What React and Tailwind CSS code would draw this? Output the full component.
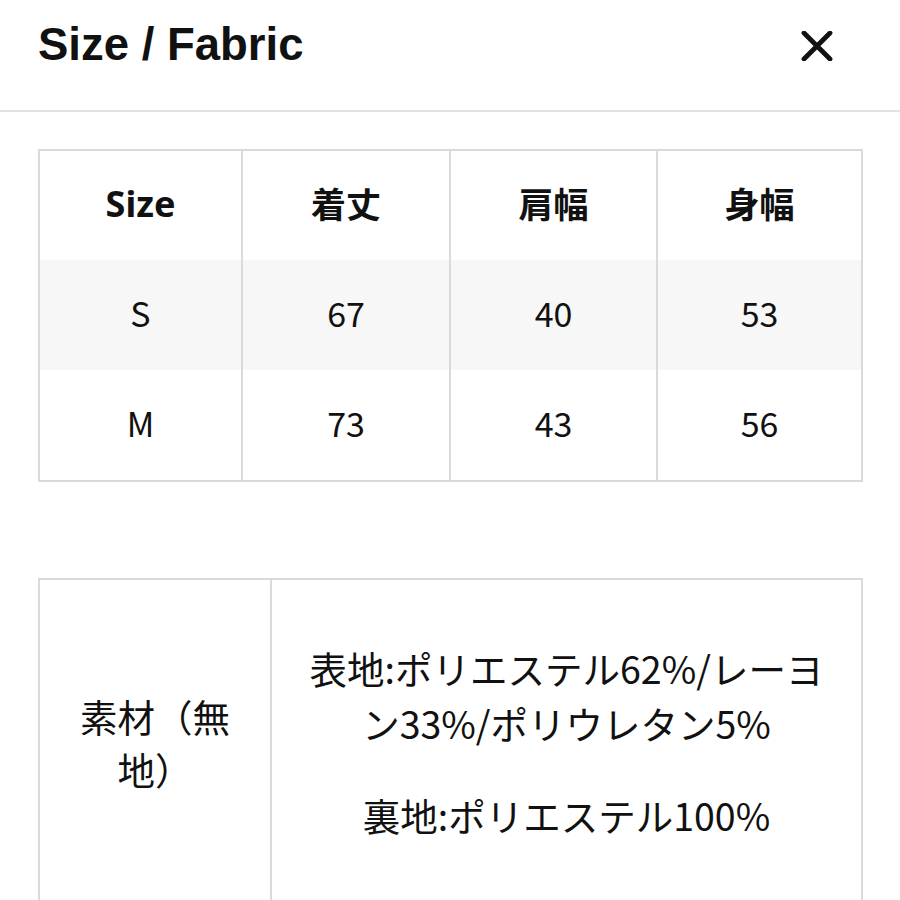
export default function App() {
  const cjk = "font-['Noto_Sans_CJK_JP',sans-serif]";
  const head = ["Size", "着丈", "肩幅", "身幅"];
  const rows = [
    ["S", "67", "40", "53"],
    ["M", "73", "43", "56"],
  ];
  return (
    <div className={`w-[900px] h-[900px] bg-white overflow-hidden text-[#111] ${cjk}`}>
      <div className="h-[90px] flex items-center justify-between pl-[38px] pr-[67px]">
        <h1 className="font-['Liberation_Sans',sans-serif] font-bold text-[45.5px] leading-none">Size / Fabric</h1>
        <svg width="32" height="30" viewBox="0 0 32 30" className="mt-[2px]">
          <path d="M3 2 L29 28 M29 2 L3 28" stroke="#111" strokeWidth="4.8" strokeLinecap="round" fill="none" />
        </svg>
      </div>
      <div className="h-[20px]" />
      <div className="h-[2px] bg-[#e2e2e2]" />

      <div className="mt-[37px] ml-[38px] w-[825px] border-2 border-[#dadada]">
        <div className="grid grid-cols-[201px_208px_207px_1fr] h-[109px]">
          {head.map((h, i) => (
            <div key={i} className={`flex items-center justify-center pb-[4px] font-bold ${i > 0 ? "border-l-2 border-[#dadada] text-[35px]" : "font-['Noto_Sans',sans-serif] text-[36px]"}`}>
              {h}
            </div>
          ))}
        </div>
        {rows.map((r, ri) => (
          <div key={ri} className={`grid grid-cols-[201px_208px_207px_1fr] h-[110px] ${ri === 0 ? "bg-[#f7f7f7]" : "bg-white"}`}>
            {r.map((c, i) => (
              <div key={i} className={`flex items-center justify-center pb-[5px] text-[34px] ${i > 0 ? "border-l-2 border-[#dadada]" : ""}`}>
                {c}
              </div>
            ))}
          </div>
        ))}
      </div>

      <div className="mt-[96px] ml-[38px] w-[825px] h-[340px] border-2 border-[#dadada] grid grid-cols-[230px_1fr]">
        <div className="flex items-center justify-center px-[34px] pb-[12px]">
          <p className="text-[37.5px] leading-[53px] text-center">素材（無地）</p>
        </div>
        <div className="border-l-2 border-[#dadada] flex flex-col items-center justify-center px-[30px] pb-[14px] text-[37.5px] leading-[55px] text-center">
          <p>表地:ポリエステル62%/レーヨン33%/ポリウレタン5%</p>
          <p className="mt-[37px]">裏地:ポリエステル100%</p>
        </div>
      </div>
    </div>
  );
}
